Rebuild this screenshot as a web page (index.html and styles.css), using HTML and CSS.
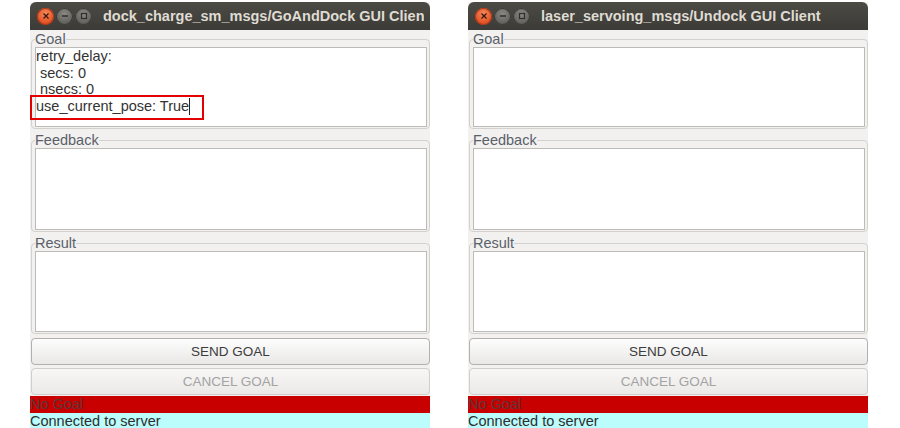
FILE: index.html
```html
<!DOCTYPE html>
<html>
<head>
<meta charset="utf-8">
<link rel="stylesheet" href="styles.css">
</head>
<body>
<div class="desk">
  <section class="win">
    <header class="titlebar">
      <div class="wbtns">
        <span class="wb close"><svg width="8" height="8" viewBox="0 0 8 8"><path d="M1.5 1.5 L6.5 6.5 M6.5 1.5 L1.5 6.5" stroke="#3b1608" stroke-width="1.3" fill="none"/></svg></span>
        <span class="wb"><svg width="8" height="8" viewBox="0 0 8 8"><path d="M1 4 H7" stroke="#2f2e2b" stroke-width="1.4"/></svg></span>
        <span class="wb"><svg width="8" height="8" viewBox="0 0 8 8"><rect x="1.5" y="1.5" width="5" height="5" stroke="#2f2e2b" stroke-width="1.2" fill="none"/></svg></span>
      </div>
      <div class="title">dock_charge_sm_msgs/GoAndDock GUI Client</div>
    </header>
    <div class="content">
      <fieldset class="group g1">
        <legend>Goal</legend>
        <div class="field">retry_delay:
 secs: 0
 nsecs: 0
use_current_pose: True<span class="caret"></span></div>
      </fieldset>
      <fieldset class="group g2">
        <legend>Feedback</legend>
        <div class="field"></div>
      </fieldset>
      <fieldset class="group g3">
        <legend>Result</legend>
        <div class="field"></div>
      </fieldset>
      <button class="btn">SEND GOAL</button>
      <button class="btn off">CANCEL GOAL</button>
      <div class="status red">No Goal</div>
      <div class="status cyan">Connected to server</div>
    </div>
  </section>
  <section class="win">
    <header class="titlebar">
      <div class="wbtns">
        <span class="wb close"><svg width="8" height="8" viewBox="0 0 8 8"><path d="M1.5 1.5 L6.5 6.5 M6.5 1.5 L1.5 6.5" stroke="#3b1608" stroke-width="1.3" fill="none"/></svg></span>
        <span class="wb"><svg width="8" height="8" viewBox="0 0 8 8"><path d="M1 4 H7" stroke="#2f2e2b" stroke-width="1.4"/></svg></span>
        <span class="wb"><svg width="8" height="8" viewBox="0 0 8 8"><rect x="1.5" y="1.5" width="5" height="5" stroke="#2f2e2b" stroke-width="1.2" fill="none"/></svg></span>
      </div>
      <div class="title">laser_servoing_msgs/Undock GUI Client</div>
    </header>
    <div class="content">
      <fieldset class="group g1">
        <legend>Goal</legend>
        <div class="field"></div>
      </fieldset>
      <fieldset class="group g2">
        <legend>Feedback</legend>
        <div class="field"></div>
      </fieldset>
      <fieldset class="group g3">
        <legend>Result</legend>
        <div class="field"></div>
      </fieldset>
      <button class="btn">SEND GOAL</button>
      <button class="btn off">CANCEL GOAL</button>
      <div class="status red">No Goal</div>
      <div class="status cyan">Connected to server</div>
    </div>
  </section>
  <div class="annot"></div>
</div>
</body>
</html>
```
FILE: styles.css
```css
* { box-sizing: border-box; }
html, body { margin: 0; padding: 0; background: #ffffff; }
body { font-family: "Liberation Sans", Arial, sans-serif; }

.desk {
  position: relative;
  display: flex;
  gap: 38px;
  padding: 2px 0 0 30px;
}

.win {
  width: 400px;
  height: 426px;
  display: flex;
  flex-direction: column;
  background: #f2f1f0;
}

.titlebar {
  height: 28px;
  flex: none;
  display: flex;
  align-items: center;
  background: linear-gradient(#4b4a45, #3c3b37);
  border-radius: 6px 6px 0 0;
  overflow: hidden;
  padding-left: 7px;
}
.wbtns { display: flex; gap: 2px; flex: none; }
.wb {
  flex: none;
  width: 17px;
  height: 17px;
  border-radius: 50%;
  display: flex;
  align-items: center;
  justify-content: center;
  background: radial-gradient(circle at 50% 35%, #8a8882, #5d5c57 75%);
  box-shadow: inset 0 0 0 1px #3a3935;
}
.wb.close {
  background: radial-gradient(circle at 50% 35%, #f58a5c, #df4a1c 75%);
  box-shadow: inset 0 0 0 1px #a8381a;
}
.title {
  margin-left: 11px;
  color: #dfdbd2;
  font-weight: bold;
  font-size: 14.5px;
  white-space: nowrap;
  overflow: hidden;
  width: 321px;
  flex: none;
}

.content {
  display: flex;
  flex-direction: column;
  padding-top: 1px;
}

.group {
  margin: 0 0 0 1px;
  padding: 0 2px 1px 3px;
  border: 1px solid #d3d1cd;
  border-radius: 4px;
  min-width: 0;
}
.group + .group { margin-top: 3px; }
.group legend {
  padding: 0;
  margin-left: 0;
  font-size: 14.5px;
  line-height: 16px;
  color: #5a6069;
}
.field {
  height: 80px;
  background: #ffffff;
  border: 1px solid #bdbbb8;
  font-size: 14.5px;
  line-height: 16.67px;
  color: #333333;
  white-space: pre;
  padding: 0;
}
.g2 .field { height: 82px; }
.g3 .field { height: 81px; }
.caret {
  display: inline-block;
  width: 1px;
  height: 17px;
  background: #222;
  vertical-align: -4px;
}

.btn {
  margin: 4px 0 0 1px;
  width: 399px;
  height: 27px;
  border: 1px solid #b3b1ad;
  border-radius: 4px;
  background: linear-gradient(#fdfdfd, #e9e8e7);
  font-family: "Liberation Sans", Arial, sans-serif;
  font-size: 13.5px;
  color: #3c3c3c;
  padding: 0;
}
.btn.off {
  margin-top: 3px;
  border-color: #d0cecb;
  background: linear-gradient(#f7f6f5, #eceae8);
  color: #a3a3a3;
}

.status {
  font-size: 14.5px;
  line-height: 17px;
  height: 17px;
  white-space: nowrap;
}
.status.red { background: #c80000; color: #5a3838; margin-top: 1px; }
.status.cyan { background: #bbfcfc; color: #2e2e2e; height: 16px; line-height: 16px; }

.annot {
  position: absolute;
  left: 30px;
  top: 95px;
  width: 174px;
  height: 25px;
  border: 2px solid #e30000;
}
```
